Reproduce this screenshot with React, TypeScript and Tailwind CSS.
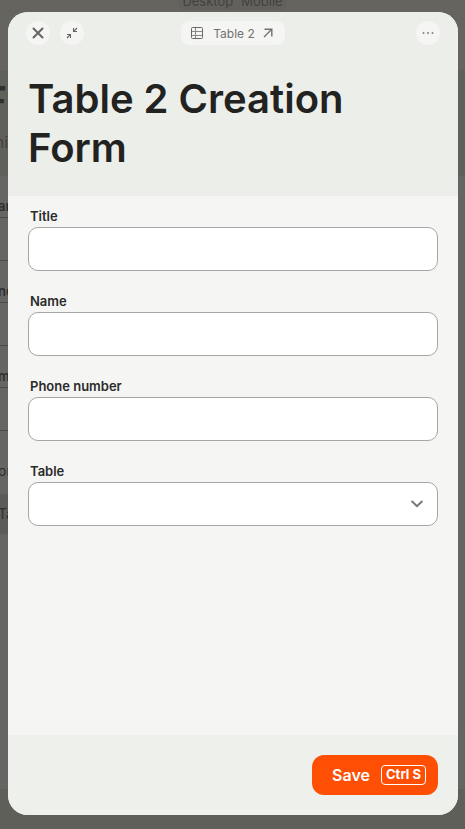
import React from "react";

function TableIcon() {
  return (
    <svg width="12" height="12" viewBox="0 0 12 12" fill="none" aria-hidden="true">
      <path d="M4.5 1v10M1 4.5h10M1 8.5h10" stroke="#8b8a87" />
      <rect x="0.5" y="0.5" width="11" height="11" rx="1" stroke="#696865" />
    </svg>
  );
}

function BackgroundPage() {
  return (
    <div aria-hidden="true" className="h-screen overflow-hidden bg-[#656563] text-[#2f2f2f]">
      <div className="flex h-[70px] items-start justify-center bg-[#66645f]">
        <div className="-mt-2 flex h-[18px] items-center gap-2 rounded-md bg-[#62615c] px-1 text-[13px] leading-5 text-[#42413f]">
          <span>Desktop</span>
          <span>Mobile</span>
        </div>
      </div>
      <div className="h-[106px] bg-[#60605b] pt-[9px]">
        <div className="flex h-11 w-[7px] justify-end overflow-hidden text-[40px] font-semibold leading-11">F</div>
        <div className="mt-[7px] flex h-6 w-2 justify-end overflow-hidden text-base text-[#42423f]">ni</div>
      </div>
      {["ar", "no", "m"].map((label) => (
        <div key={label} className="h-[85px] pt-5">
          <div className="h-[21px] w-2 overflow-hidden -indent-0.5 text-[13px] font-semibold leading-[21px]">{label}</div>
          <div className="mr-4 h-11 border-y border-[#4b4b49]" />
        </div>
      ))}
      <div className="h-[63px] pt-7">
        <div className="h-6 w-2 overflow-hidden -indent-0.5 text-sm leading-6">or</div>
      </div>
      <div className="mr-4 h-10 bg-[#5b5b59] pt-2">
        <div className="h-6 w-2 overflow-hidden -indent-0.5 text-sm leading-6">Ta</div>
      </div>
      <div className="h-[255px]" />
      <div className="h-10 bg-[#5f5f5a]" />
    </div>
  );
}

function Field({ id, label }: { id: string; label: string }) {
  return (
    <div className="flex flex-col">
      <label htmlFor={id} className="px-0.5 pb-0.5 text-[13px] font-semibold leading-[18px] text-[#2b2b2a]">
        {label}
      </label>
      <input id={id} type="text" className="h-11 rounded-[10px] border border-[#a6a6a4] bg-white px-3 text-sm outline-none" />
    </div>
  );
}

export default function App() {
  return (
    <div className="relative h-screen overflow-hidden font-['Inter',sans-serif]">
      <BackgroundPage />
      <div className="absolute inset-0 flex pt-3 pr-[7px] pb-[14px] pl-2">
        <div role="dialog" aria-labelledby="form-title" className="flex flex-1 flex-col overflow-hidden rounded-[20px] bg-[#f5f5f4]">
          <header className="bg-[#eceee9] px-5 pb-6">
            <div className="-mx-0.5 flex items-center justify-between pt-[9px]">
              <div className="flex w-20 gap-[10px]">
                <button type="button" aria-label="Close" className="flex size-6 items-center justify-center rounded-full bg-[#f5f5f4]">
                  <svg width="12" height="12" viewBox="0 0 12 12" fill="none" stroke="#666563" strokeWidth="2" strokeLinecap="round" aria-hidden="true">
                    <path d="M1.5 1.5l9 9M10.5 1.5l-9 9" />
                  </svg>
                </button>
                <button type="button" aria-label="Collapse" className="flex size-6 items-center justify-center rounded-full bg-[#f5f5f4]">
                  <svg width="12" height="12" viewBox="0 0 12 12" fill="none" stroke="#666563" strokeWidth="1.1" aria-hidden="true">
                    <path d="M11 1L7.5 4.5M7.5 1v3.5H11M1 11l3.5-3.5M1 7.5h3.5V11" />
                  </svg>
                </button>
              </div>
              <a href="#table-2" className="flex h-6 items-center rounded-lg bg-[#f5f5f4] px-[10px] text-xs text-[#73726f]">
                <TableIcon />
                <span className="mr-2 ml-[10px] pt-px">Table 2</span>
                <svg width="10" height="10" viewBox="0 0 10 10" fill="none" stroke="#73726f" strokeWidth="1.4" className="mr-[2px]" aria-hidden="true">
                  <path d="M1 9l7.5-7.5M1.5 1.2h7.3v7.3" />
                </svg>
              </a>
              <div className="flex w-20 justify-end">
                <button type="button" aria-label="More options" className="flex size-6 items-center justify-center rounded-full bg-[#f5f5f4]">
                  <svg width="12" height="4" viewBox="0 0 12 4" fill="#85847f" aria-hidden="true">
                    <circle cx="1.5" cy="2" r="1" />
                    <circle cx="6" cy="2" r="1" />
                    <circle cx="10.5" cy="2" r="1" />
                  </svg>
                </button>
              </div>
            </div>
            <h1 id="form-title" className="mt-[29px] text-[40px] font-semibold leading-[49px] text-[#222221]">
              Table 2 Creation Form
            </h1>
          </header>
          <form id="creation-form" className="flex flex-1 flex-col gap-[21px] px-5 pt-[11px]">
            <Field id="title" label="Title" />
            <Field id="name" label="Name" />
            <Field id="phone" label="Phone number" />
            <div className="flex flex-col">
              <label htmlFor="table" className="px-0.5 pb-0.5 text-[13px] font-semibold leading-[18px] text-[#2b2b2a]">
                Table
              </label>
              <div className="relative">
                <select id="table" defaultValue="" className="h-11 w-full appearance-none rounded-[10px] border border-[#a6a6a4] bg-white px-3 text-sm outline-none">
                  <option value="" />
                </select>
                <svg width="12" height="8" viewBox="0 0 12 8" fill="none" stroke="#7b7b79" strokeWidth="2" strokeLinecap="round" strokeLinejoin="round" className="pointer-events-none absolute top-[18px] right-[15px]" aria-hidden="true">
                  <path d="M1.2 1.5L6 6.3l4.8-4.8" />
                </svg>
              </div>
            </div>
          </form>
          <footer className="flex justify-end bg-[#eef0eb] p-5">
            <button type="submit" form="creation-form" className="flex h-10 items-center gap-[11px] rounded-xl bg-[#ff4f05] pr-3 pl-5 text-base font-semibold text-white">
              Save
              <kbd className="flex h-5 items-center justify-center rounded border border-white px-1 font-['Inter',sans-serif] text-[13px] font-bold">Ctrl S</kbd>
            </button>
          </footer>
        </div>
      </div>
    </div>
  );
}
